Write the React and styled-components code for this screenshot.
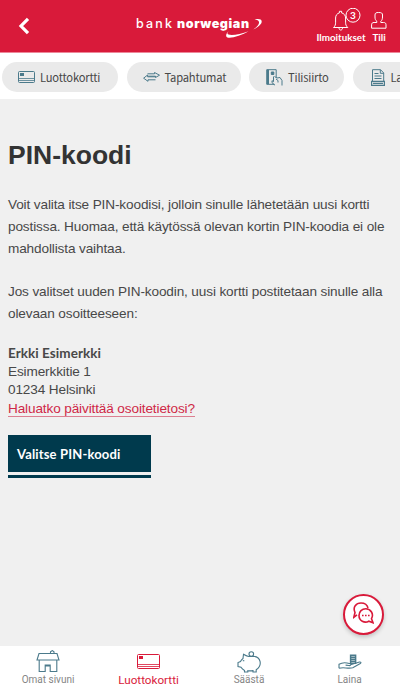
import React from "react";
import styled, { createGlobalStyle } from "styled-components";

const RED = "#d91a3a";
const NAVY = "#003a4d";
const TEAL = "#4b7a8b";

const App = () => {
  return (
    <>
      <GlobalStyle />
      <Page>
        <Header />
        <ChipNav />
        <PinContent />
        <ChatButton aria-label="Chat">
          <ChatIcon />
        </ChatButton>
        <TabBar />
      </Page>
    </>
  );
};

const Header = () => (
  <TopBar>
    <BackButton aria-label="Takaisin">
      <svg width="12" height="18" viewBox="0 0 12 18" fill="none" stroke="#fff" strokeWidth="3.2">
        <path d="M10 1.8 3 9l7 7.2" />
      </svg>
    </BackButton>
    <Logo>
      <LogoLight>bank</LogoLight>
      <LogoBold>norwegian</LogoBold>
      <Swoosh width="37" height="22" viewBox="0 0 37 22" fill="#fff">
        <path d="M29.500 2.500c4-.9 7.100-.4 7.200 1.900.1 2.500-3 5.700-8.300 8 4-3 6-5.500 5.600-7.500-.3-1.600-1.800-2-4.500-2.400z" />
        <path d="M4.300 13.500c-2 1.800-2.500 3.400-.8 4.100 3.500 1.400 12.500-.5 20-3.300-6 3.500-15.500 6.900-20 6.400C.3 20.300.2 17 4.300 13.500z" />
      </Swoosh>
    </Logo>
    <Account>
      <AccountLink $width={50}>
        <svg width="32" height="24" viewBox="0 0 32 24" fill="none" stroke="#fff" strokeWidth="1">
          <path d="M1.500 19.500h14.300c-1.800-1.600-2.200-3-2.200-5.300V10c0-2.800-1.900-4.700-4-5.100V3.300H7.400v1.600c-2.300.5-3.800 2.500-3.800 5.100v4.200c0 2.500-.4 3.800-2.100 5.300zM7 19.800c0 3 3.500 3 3.500 0" />
          <circle cx="21" cy="7.200" r="7" />
        </svg>
        <Count>3</Count>
        <AccountLabel>Ilmoitukset</AccountLabel>
      </AccountLink>
      <AccountLink $width={16}>
        <svg width="16" height="24" viewBox="0 0 16 24" fill="none" stroke="#fff" strokeWidth="1">
          <path d="M4 9V7c0-2 1-2.500 3.700-2.500s3.800.5 3.800 2.500v2c0 1.800-.5 3.500-1.700 4.300v1.200h2.700c1.800 0 2.500.8 2.500 2.300v3.400H.6v-3.400c0-1.500.7-2.300 2.500-2.300h2.700v-1.200C4.500 12.500 4 10.800 4 9z" />
        </svg>
        <AccountLabel>Tili</AccountLabel>
      </AccountLink>
    </Account>
  </TopBar>
);

const ChipNav = () => (
  <Chips>
    <Chip $width={116}>
      <CardIcon width="17" height="12" color={TEAL} />
      <ChipLabel>Luottokortti</ChipLabel>
    </Chip>
    <Chip $width={114}>
      <svg width="17" height="10" viewBox="0 0 17 10" fill="none" stroke={TEAL} strokeWidth="1">
        <path d="M4.500 1.800 11.500 1.800V.5l5 2.700-4 2.300V4.200H5.200" />
        <path d="M12.500 7.800H5v1.500L.6 6.200l4-3.200v1.800h8.100" />
      </svg>
      <ChipLabel>Tapahtumat</ChipLabel>
    </Chip>
    <Chip $width={95} $pad={17}>
      <svg width="17" height="17" viewBox="0 0 17 17" fill="none" stroke={TEAL} strokeWidth="1">
        <path d="M.7.700h9.500v8M.7.700v14.600h7.500" />
        <path d="M2 .7v14.500" strokeWidth="2" />
        <path d="M5.300 3v2.500h2.500V3z" fill={TEAL} />
        <path d="M7.500 7.500v5.200l-1.500-1v2l3 2.500M8.500 7.500l2.500 1.500 3-.5 2 3v5M10 10l2 1.500v2" />
      </svg>
      <ChipLabel>Tilisiirto</ChipLabel>
    </Chip>
    <Chip $width={90} $gap={6} $pad={18}>
      <svg width="14" height="17" viewBox="0 0 14 17" fill="none" stroke={TEAL} strokeWidth="1">
        <path d="M1.500 12V.7h8l3.200 3.200V12M9.300.7v3.600h3.400M3.500 4.500h4M3.500 7h7M3.500 9.500h7" />
        <path d="M.6 12.300h12.800v4H.6zM2 14.300h10" strokeWidth="1.200" />
      </svg>
      <ChipLabel>Laskut</ChipLabel>
    </Chip>
  </Chips>
);

const PinContent = () => (
  <Content>
    <Title>PIN-koodi</Title>
    <Paragraph>
      Voit valita itse PIN-koodisi, jolloin sinulle lähetetään uusi kortti
      <br />
      postissa. Huomaa, että käytössä olevan kortin PIN-koodia ei ole
      <br />
      mahdollista vaihtaa.
    </Paragraph>
    <Paragraph>
      Jos valitset uuden PIN-koodin, uusi kortti postitetaan sinulle alla
      <br />
      olevaan osoitteeseen:
    </Paragraph>
    <Address>
      <Name>Erkki Esimerkki</Name>
      <span>Esimerkkitie 1</span>
      <span>01234 Helsinki</span>
      <UpdateLink>Haluatko päivittää osoitetietosi?</UpdateLink>
    </Address>
    <PinButton>Valitse PIN-koodi</PinButton>
    <ButtonLine />
  </Content>
);

const TabBar = () => (
  <Tabs>
    <Tab $width={96}>
      <TabIcon>
        <svg width="24" height="23" viewBox="0 0 24 23" fill="none" stroke={TEAL} strokeWidth="1.100">
          <path d="M3 3.500h18l2 6.500H1zM3.200 10v11.500h6V15h5v6.500h6.600V10M14.500 3.500V1.800l1.800-1.200L18 1.800v1.700M9.200 16h5" />
        </svg>
      </TabIcon>
      <TabLabel>Omat sivuni</TabLabel>
    </Tab>
    <Tab $width={105}>
      <TabIcon>
        <CardIcon width="23" height="15" color={RED} />
      </TabIcon>
      <TabLabel $active>Luottokortti</TabLabel>
    </Tab>
    <Tab $width={96}>
      <TabIcon>
        <svg width="24" height="22" viewBox="0 0 24 22" fill="none" stroke={TEAL} strokeWidth="1.100">
          <path d="M11.500 5.500C9.500 5 8.500 4.500 6.500 3.300L6 7.500c-1.500 1-2 1.900-2.500 3L1 11.500v4l3 .8c1 1.800 2.200 2.500 3.500 3.200V21h3.300v-1.300c2 .3 3.700.2 5.200-.1V21h3.200v-2.300c6.300-4 5-13-2.700-13.400M11.500 5.500h5" />
          <circle cx="14.300" cy="3" r="2.300" />
          <path d="M5.800 9.700h1.500" />
        </svg>
      </TabIcon>
      <TabLabel>Säästä</TabLabel>
    </Tab>
    <Tab $width={105}>
      <TabIcon>
        <svg width="24" height="16" viewBox="0 0 24 16" fill="none" stroke={TEAL} strokeWidth="1.100">
          <path d="M12.600 1.200h5v8h-5zM12.500 3.200h5M12.500 5.200h5M12.500 7.200h5" strokeWidth="1.500" />
          <path d="M1 14.300v-4c2.500-1.500 5.300-1.900 8-1.300l3.300.8c1.500.7 0 2.100-1.500 1.700l-3.200-.4M12.500 10.800 21.500 8c1.400-.2 2 .6.8 1.500l-7.500 4.300c-5.300 1.100-9.300-1-13.800.5" />
        </svg>
      </TabIcon>
      <TabLabel>Laina</TabLabel>
    </Tab>
  </Tabs>
);

const CardIcon = ({ width, height, color }) => (
  <svg width={width} height={height} viewBox={`0 0 ${width} ${height}`} fill="none" stroke={color}>
    <rect x=".5" y=".5" width={width - 1} height={height - 1} rx="1" />
    <rect x="2.500" y="2.500" width="3" height="2" fill={color} />
    <path d={`M0 ${height - 4.5}H${width}M0 ${height - 2.5}H${width}`} strokeWidth=".8" />
  </svg>
);

const ChatIcon = () => (
  <svg width="21" height="22" viewBox="0 0 21 22" fill="none" stroke={RED} strokeWidth="1.600">
    <path d="M4 12.800.8 15.300 2 10.500C-.5 5 3 1 8 1c3.500 0 6.300 2 7 5" />
    <path d="M18.500 16.700 20 20.700l-4.200-1.500c-4.300 2.500-9.800-.4-9.800-5.700 0-3.900 3-6.800 6.800-6.800 5 0 8.300 5.500 5.700 10z" />
    <path d="M9 13.500h1.600M12 13.500h1.600M15 13.500h1.600" />
  </svg>
);

const GlobalStyle = createGlobalStyle`
  * {
    box-sizing: border-box;
  }

  body {
    margin: 0;
    overflow: hidden;
    background: #f0f0f0;
    color: #484848;
    font-family: "Liberation Sans", Arial, sans-serif;
  }

  svg {
    display: block;
    flex-shrink: 0;
  }
`;

const Page = styled.div`
  display: flex;
  flex-direction: column;
  width: 400px;
  height: 692px;
  position: relative;
  overflow: hidden;
`;

const TopBar = styled.header`
  display: flex;
  flex-shrink: 0;
  height: 53px;
  background: ${RED};
  border-bottom: 1px solid #ed8799;
`;

const BackButton = styled.button`
  width: 136px;
  padding: 0 0 0 18px;
  border: 0;
  background: none;
  display: flex;
  align-items: center;
`;

const Logo = styled.div`
  position: relative;
  display: flex;
  align-items: flex-start;
  width: 180px;
  padding-top: 16px;
  color: #fff;
  font-family: Inter, sans-serif;
  font-size: 12.500px;
  line-height: 15px;
`;

const LogoLight = styled.span`
  width: 41px;
  font-weight: 500;
  letter-spacing: 2.200px;
`;

const LogoBold = styled.span`
  font-weight: 900;
  letter-spacing: 0.600px;
`;

const Swoosh = styled.svg`
  position: absolute;
  left: 89px;
  top: 17px;
`;

const Account = styled.div`
  display: flex;
  gap: 5px;
`;

const AccountLink = styled.div`
  position: relative;
  display: flex;
  flex-direction: column;
  align-items: center;
  width: ${(props) => props.$width}px;
  padding-top: 8px;

  &:first-child svg {
    margin-left: 14px;
  }
`;

const AccountLabel = styled.span`
  margin-top: -1px;
  color: #fff;
  font-family: Lato, sans-serif;
  font-size: 9.800px;
  font-weight: 700;
  line-height: 13px;
  white-space: nowrap;
`;

const Count = styled.span`
  position: absolute;
  left: 34px;
  top: 9px;
  color: #fff;
  font-family: Lato, sans-serif;
  font-size: 10px;
  font-weight: 700;
  line-height: 12px;
`;

const Chips = styled.nav`
  display: flex;
  flex-shrink: 0;
  align-items: center;
  gap: 8.500px;
  height: 46px;
  padding: 2px 0 0 2px;
  overflow: hidden;
  background: #fff;
`;

const Chip = styled.a`
  display: flex;
  flex-shrink: 0;
  align-items: center;
  gap: ${(props) => props.$gap || 5}px;
  width: ${(props) => props.$width}px;
  height: 30px;
  padding-left: ${(props) => props.$pad || 16}px;
  border-radius: 15px;
  background: #eaeaea;
`;

const ChipLabel = styled.span`
  color: #484848;
  font-family: "Noto Sans CJK SC", sans-serif;
  font-size: 11.200px;
  letter-spacing: -0.200px;
  line-height: 16px;
`;

const Content = styled.main`
  flex: 1;
  padding: 40px 8px 0;
`;

const Title = styled.h1`
  margin: 0 0 23px;
  color: #333;
  font-size: 26.500px;
  line-height: 32px;
`;

const Paragraph = styled.p`
  margin: 0 0 21.800px;
  font-size: 13.600px;
  letter-spacing: -0.130px;
  line-height: 21.800px;
  white-space: nowrap;
`;

const Address = styled.div`
  display: flex;
  flex-direction: column;
  align-items: flex-start;
  margin-top: -2.500px;
  font-size: 13.600px;
  letter-spacing: -0.130px;
  line-height: 18.600px;
`;

const Name = styled.strong`
  font-family: Lato, sans-serif;
  font-size: 13.500px;
  letter-spacing: 0.050px;
`;

const UpdateLink = styled.a`
  height: 17px;
  border-bottom: 1px solid #dc7f91;
  color: #cf2847;
`;

const PinButton = styled.button`
  display: block;
  width: 143px;
  height: 37px;
  margin-top: 18.600px;
  padding: 0 0 0 9px;
  border: 0;
  background: ${NAVY};
  color: #fff;
  font-family: Lato, sans-serif;
  font-size: 13px;
  font-weight: 700;
  letter-spacing: 0.150px;
  text-align: left;
`;

const ButtonLine = styled.div`
  width: 143px;
  height: 3px;
  margin-top: 3px;
  background: ${NAVY};
`;

const ChatButton = styled.button`
  position: absolute;
  left: 343px;
  top: 594px;
  display: flex;
  align-items: center;
  justify-content: center;
  width: 41px;
  height: 41px;
  padding: 0 0 3px;
  border: 2px solid ${RED};
  border-radius: 50%;
  background: #fff;
  box-shadow: 0 2px 4px rgba(0, 0, 0, 0.2);
`;

const Tabs = styled.nav`
  display: flex;
  flex-shrink: 0;
  height: 46px;
  background: #fff;
`;

const Tab = styled.a`
  display: flex;
  flex-direction: column;
  flex-shrink: 0;
  align-items: center;
  width: ${(props) => props.$width}px;
  padding-top: 4px;
`;

const TabIcon = styled.div`
  display: flex;
  align-items: center;
  height: 23px;
`;

const TabLabel = styled.span`
  color: ${(props) => (props.$active ? RED : "#858585")};
  font-family: Roboto, sans-serif;
  font-size: ${(props) => (props.$active ? 11.7 : 10)}px;
  line-height: 14px;
`;

export default App;
